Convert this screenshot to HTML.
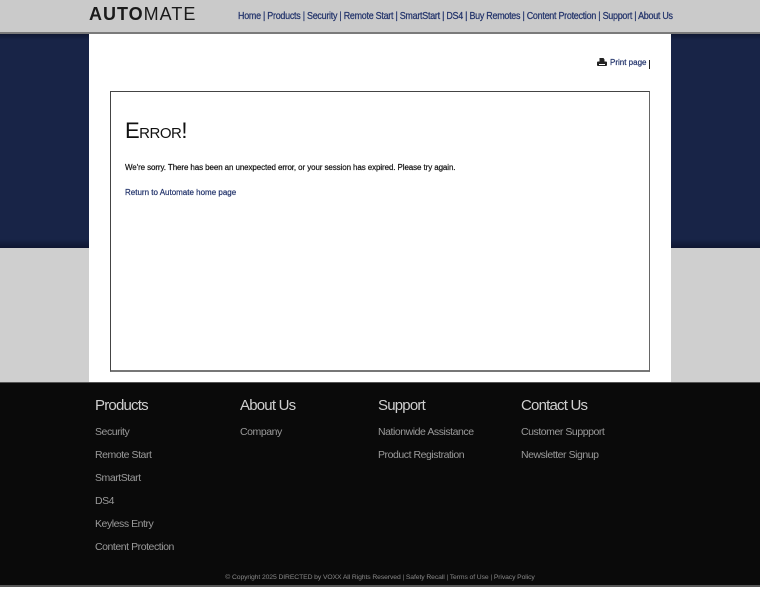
<!DOCTYPE html>
<html><head><meta charset="utf-8"><style>
*{margin:0;padding:0;box-sizing:border-box}
body{width:760px;height:600px;background:#fff;font-family:"Liberation Sans",Arial,sans-serif;position:relative;overflow:hidden}
#hdr{position:absolute;left:0;top:0;width:760px;height:34px;background:#cacaca;border-bottom:2px solid #7a7a7a}
#logo{position:absolute;left:89px;top:4px;font-size:18px;letter-spacing:1px;color:#1a1a1a}
#logo b{font-weight:900}
#nav{position:absolute;left:238px;top:10px;font-size:10.5px;color:#22336b;letter-spacing:-0.3px;white-space:nowrap;transform:scaleX(0.85);transform-origin:0 0;-webkit-text-stroke:0.25px #22336b}
#blue{position:absolute;left:0;top:34px;width:760px;height:214px;background:linear-gradient(#0f1833 0,#182447 6px,#182447 205px,#0f1631 214px)}
#gray{position:absolute;left:0;top:248px;width:760px;height:134px;background:#cfcfcf}
#main{position:absolute;left:89px;top:34px;width:582px;height:348px;background:#fff}
#print{position:absolute;left:597px;top:58px;font-size:8px;color:#22336b;-webkit-text-stroke:0.2px #22336b}
#print svg{vertical-align:-2px;margin-right:3px}
#bar{position:absolute;left:649px;top:60px;width:1px;height:9px;background:#222}
#box{position:absolute;left:110px;top:91px;width:540px;height:281px;border:1px solid #444;border-right-color:#666;border-bottom:2px solid #777}
#box h1{position:absolute;left:14px;top:26px;font-size:22px;font-weight:normal;color:#111;font-variant:small-caps;letter-spacing:-0.5px}
#box p{position:absolute;left:14px;top:71px;font-size:8px;color:#111;-webkit-text-stroke:0.2px #111;letter-spacing:-0.1px}
#box a{position:absolute;left:14px;top:96px;font-size:8px;color:#22336b;text-decoration:none;-webkit-text-stroke:0.2px #22336b}
#foot{position:absolute;left:0;top:382px;width:760px;height:205px;background:#0a0a0a;border-top:1px solid #555;border-bottom:2px solid #555}
.col{position:absolute;top:14px;color:#ccc}
.col h3{font-size:15px;font-weight:normal;color:#cfcfcf;letter-spacing:-0.8px;margin-bottom:12px}
.col div{font-size:10.5px;color:#9a9a9a;height:23px;letter-spacing:-0.45px}
#copy{position:absolute;left:0;width:760px;top:191px;text-align:center;font-size:6.8px;color:#888;letter-spacing:-0.1px}
</style></head><body>
<div id="hdr"><div id="logo"><b>AUTO</b>MATE</div>
<div id="nav">Home | Products | Security | Remote Start | SmartStart | DS4 | Buy Remotes | Content Protection | Support | About Us</div></div>
<div id="blue"></div><div id="gray"></div>
<div id="main"></div>
<div id="print"><svg width="10" height="9" viewBox="0 0 10 9"><path d="M2.5 0h4l1 1.5v2h-5z" fill="#222"/><rect x="0" y="3.5" width="10" height="4.5" rx="1" fill="#222"/><rect x="2" y="6" width="6" height="1" fill="#fff"/></svg>Print page</div><div id="bar"></div>
<div id="box"><h1>Error!</h1>
<p>We're sorry. There has been an unexpected error, or your session has expired. Please try again.</p>
<a>Return to Automate home page</a></div>
<div id="foot">
<div class="col" style="left:95px"><h3>Products</h3><div>Security</div><div>Remote Start</div><div>SmartStart</div><div>DS4</div><div>Keyless Entry</div><div>Content Protection</div></div>
<div class="col" style="left:240px"><h3>About Us</h3><div>Company</div></div>
<div class="col" style="left:378px"><h3>Support</h3><div>Nationwide Assistance</div><div>Product Registration</div></div>
<div class="col" style="left:521px"><h3>Contact Us</h3><div>Customer Suppport</div><div>Newsletter Signup</div></div>
<div id="copy">© Copyright 2025 DIRECTED by VOXX All Rights Reserved | Safety Recall | Terms of Use | Privacy Policy</div>
</div>
</body></html>
